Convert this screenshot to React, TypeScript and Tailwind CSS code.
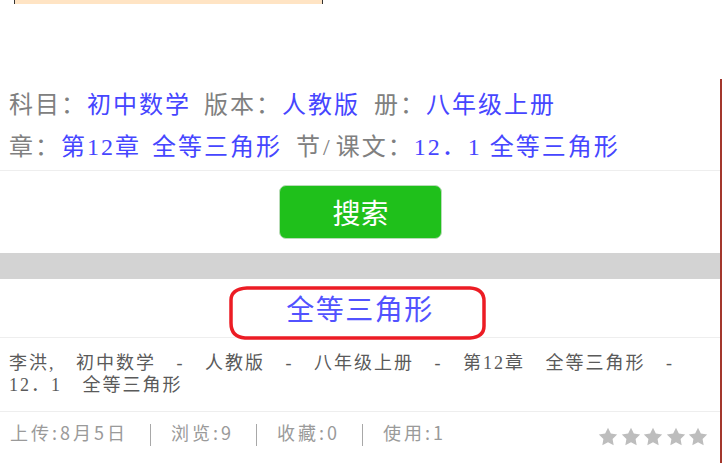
import React from "react";

const serifCJK = {
  fontFamily: '"Liberation Serif", "Noto Sans CJK SC", serif',
};

function Star() {
  return (
    <svg width="22" height="22" viewBox="0 0 24 24" className="block">
      <path
        d="M12 2l3.09 6.26L22 9.27l-5 4.87 1.18 6.88L12 17.77l-6.18 3.25L7 14.14 2 9.27l6.91-1.01L12 2z"
        fill="#bdbdbd"
      />
    </svg>
  );
}

function Sep() {
  return <span className="inline-block w-px h-[22px] bg-[#a8a8a8] align-middle ml-[22px] mr-[20px]" />;
}

export default function App() {
  return (
    <div className="w-[726px] bg-white font-['Noto_Sans_CJK_SC',sans-serif]">
      {/* top leftover block */}
      <div className="h-[79px]">
        <div className="ml-[14px] w-[309px] h-[4px] bg-[#ffe4c4] border-l border-r border-[#333333]" />
      </div>

      <div className="w-[722px] border-r-2 border-[#a3362c]">
        {/* filters */}
        <div
          className="pl-[9px] pt-[5px] pb-[2px] border-b border-[#eeeeee] text-[24px] leading-[42px] tracking-[2px] whitespace-nowrap"
          style={serifCJK}
        >
          <div>
            <span className="text-[#808080]">科目：</span>
            <span className="text-[#4646ff]">初中数学</span>
            <span className="text-[#808080] ml-[13px]">版本：</span>
            <span className="text-[#4646ff]">人教版</span>
            <span className="text-[#808080] ml-[14px]">册：</span>
            <span className="text-[#4646ff]">八年级上册</span>
          </div>
          <div>
            <span className="text-[#808080]">章：</span>
            <span className="text-[#4646ff]">第12章</span>
            <span className="text-[#4646ff] ml-[11px]">全等三角形</span>
            <span className="text-[#808080] ml-[14px]">
              节<span className="pr-[4px] pl-[1px]">/</span>课文：
            </span>
            <span className="text-[#4646ff]">12．1 全等三角形</span>
          </div>
        </div>

        {/* search button */}
        <div className="flex justify-center pt-[14px] pb-[14px] pl-[1px]">
          <button className="w-[163px] h-[54px] rounded-[7px] bg-[#1fc01b] border border-[#b9dcb8] text-white text-[28px] leading-none font-['Noto_Sans_CJK_SC',sans-serif]">
            搜索
          </button>
        </div>

        {/* gray band */}
        <div className="h-[26px] bg-[#d3d3d3]" />

        {/* title */}
        <div className="relative h-[59px] border-b border-[#eeeeee] text-center text-[28px] leading-[58px] tracking-[1.5px] text-[#5252ff]">
          全等三角形
          <svg
            className="absolute left-[228px] top-[6px] overflow-visible"
            width="260"
            height="56"
            viewBox="0 0 260 56"
          >
            <path
              d="M19 3 L242 3 Q256 4 256 16 L256 41 Q256 52 242 53 L17 53 Q3 52 3 38 L3 15 Q3 4 19 3 Z"
              fill="none"
              stroke="#ec1c24"
              strokeWidth="3.5"
            />
          </svg>
        </div>

        {/* description */}
        <div className="pl-[9px] pr-[11px] pt-[14px] pb-[15px] border-b border-[#eeeeee]">
          <div
            className="text-[18px] leading-[22px] tracking-[2px] [word-spacing:14px] text-[#5a5a5a]"
            style={serifCJK}
          >
            李洪, 初中数学 - 人教版 - 八年级上册 - 第12章 全等三角形 - 12．1 全等三角形
          </div>
        </div>

        {/* meta */}
        <div className="h-[51px] flex justify-between pl-[10px] pr-[11px]">
          <div className="pt-[8px] text-[18px] leading-[24px] tracking-[3px] text-[#9a9a9a] whitespace-nowrap">
            <span>上传:8月5日</span>
            <Sep />
            <span>浏览:9</span>
            <Sep />
            <span>收藏:0</span>
            <Sep />
            <span>使用:1</span>
          </div>
          <div className="pt-[14px] flex gap-[0.5px]">
            <Star />
            <Star />
            <Star />
            <Star />
            <Star />
          </div>
        </div>
      </div>
    </div>
  );
}
